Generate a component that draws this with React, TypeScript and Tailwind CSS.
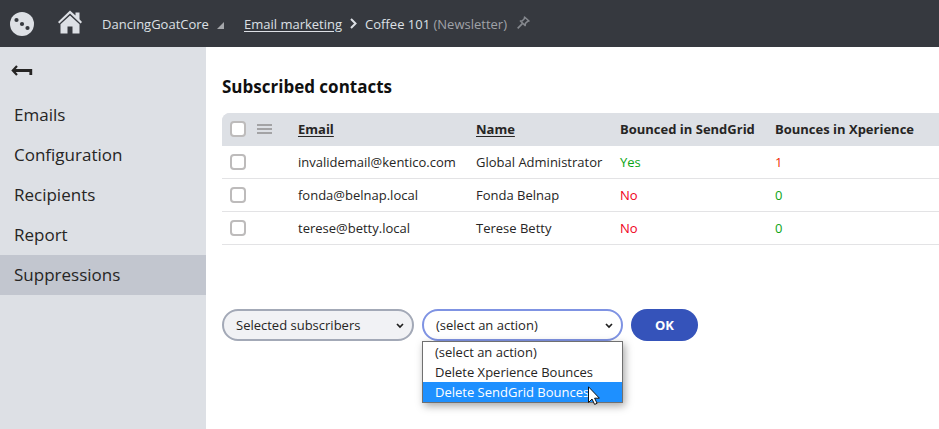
import React from "react";

const navItems = ["Emails", "Configuration", "Recipients", "Report", "Suppressions"];

const contacts = [
  { email: "invalidemail@kentico.com", name: "Global Administrator", bounced: true, bounces: 1 },
  { email: "fonda@belnap.local", name: "Fonda Belnap", bounced: false, bounces: 0 },
  { email: "terese@betty.local", name: "Terese Betty", bounced: false, bounces: 0 },
];

const actions = ["(select an action)", "Delete Xperience Bounces", "Delete SendGrid Bounces"];

function Logo() {
  return (
    <svg width="24" height="24" viewBox="0 0 24 24" aria-hidden="true">
      <circle cx="12" cy="12" r="12" fill="#dde0e5" />
      <circle cx="6.5" cy="8" r="2.1" fill="#36393f" />
      <circle cx="12" cy="12" r="2.1" fill="#36393f" />
      <circle cx="17.5" cy="16" r="2.1" fill="#36393f" />
    </svg>
  );
}

function HomeIcon() {
  return (
    <svg width="24" height="24" viewBox="0 0 24 24" fill="#dde0e5" aria-hidden="true">
      <path d="M12 0.5 L17.5 5.6 V2.5 H21.5 V9.3 L24 12 L22.6 13.4 L12 3.5 L1.4 13.4 L0 12 Z" />
      <path d="M12 5.4 L21.5 14.2 V23.5 H14.5 V16.5 H9.5 V23.5 H2.5 V14.2 Z" />
    </svg>
  );
}

function BackArrow() {
  return (
    <svg width="22" height="12" viewBox="0 0 22 12" fill="none" stroke="#262524" aria-hidden="true">
      <path d="M6 1 L1.8 5.5 L6 10" strokeWidth="2.2" />
      <path d="M2 5.5 H19.8 V10" strokeWidth="2.8" />
    </svg>
  );
}

function PinIcon() {
  return (
    <svg width="13" height="13" viewBox="0 0 13 13" fill="none" stroke="#85888e" aria-hidden="true">
      <path d="M7.5 1 L12 5 L10.6 5.4 L8.4 7.4 L8.2 9.6 L3.4 5 L5.4 4.7 L7.5 2.4 Z" strokeWidth="1.5" strokeLinejoin="round" />
      <path d="M5.6 7.4 L0.7 12.3" strokeWidth="1.7" />
    </svg>
  );
}

function Chevron() {
  return (
    <svg className="pointer-events-none absolute right-2.5 top-3.5" width="8" height="6" viewBox="0 0 8 6" fill="none" stroke="#1f1f1f" aria-hidden="true">
      <path d="M1 1 L4 4 L7 1" strokeWidth="1.7" />
    </svg>
  );
}

function Check({ label }: { label: string }) {
  return (
    <input
      type="checkbox"
      aria-label={label}
      className="block size-4 appearance-none rounded-sm border-2 border-[#bdbbbb] bg-white checked:bg-[#3553ba]"
    />
  );
}

export default function App() {
  return (
    <div className="flex min-h-screen flex-col bg-white font-['Open_Sans','Noto_Sans',sans-serif] text-[13px] leading-5 text-[#262524]">
      <header className="flex h-[47px] items-center bg-[#36393f] pl-2.5 text-[#dde0e5]">
        <a href="#dashboard" aria-label="Application list"><Logo /></a>
        <a href="#home" aria-label="Home" className="ml-6 pb-1"><HomeIcon /></a>
        <button type="button" className="ml-5 flex w-[122px] items-center gap-2 text-left">
          DancingGoatCore
          <svg className="mt-1" width="7" height="7" viewBox="0 0 7 7" fill="#a5a7ab" aria-hidden="true">
            <path d="M7 0 V7 H0 Z" />
          </svg>
        </button>
        <nav aria-label="Breadcrumb" className="ml-5 flex items-center">
          <a href="#marketing" className="underline underline-offset-2">Email marketing</a>
          <svg className="mx-2" width="7" height="11" viewBox="0 0 7 11" fill="none" stroke="#dde0e5" aria-hidden="true">
            <path d="M1 1 L5.5 5.5 L1 10" strokeWidth="2" />
          </svg>
          <span>Coffee 101 <span className="text-[#a0a2a8]">(Newsletter)</span></span>
          <button type="button" aria-label="Pin this page" className="ml-2.5 pb-0.5"><PinIcon /></button>
        </nav>
      </header>

      <div className="flex flex-1">
        <aside className="w-[206px] shrink-0 bg-[#dde0e5]">
          <div className="flex h-12 items-center pl-[11px]">
            <button type="button" aria-label="Back"><BackArrow /></button>
          </div>
          <nav aria-label="Newsletter">
            {navItems.map((item) => (
              <a
                key={item}
                href={"#" + item.toLowerCase()}
                aria-current={item === "Suppressions" ? "page" : undefined}
                className="flex h-10 items-center pl-3.5 text-[17px] aria-[current=page]:bg-[#c2c6cf]"
              >
                {item}
              </a>
            ))}
          </nav>
        </aside>

        <main className="min-w-0 flex-1 pl-4 pt-7">
          <h1 className="text-[17px] font-bold leading-6 text-[#101010]">Subscribed contacts</h1>

          <table className="mt-3.5 w-full table-fixed border-separate border-spacing-0 text-left">
            <colgroup>
              <col className="w-[35px]" />
              <col className="w-[33px]" />
              <col className="w-[178px]" />
              <col className="w-36" />
              <col className="w-[155px]" />
              <col />
            </colgroup>
            <thead>
              <tr className="h-[33px] bg-[#dde0e5] *:pb-px">
                <th className="rounded-tl-lg bg-[#dde0e5] pl-2"><Check label="Select all contacts" /></th>
                <th>
                  <button type="button" aria-label="List options" className="block">
                    <svg width="15" height="10" viewBox="0 0 15 10" fill="#a3a3a5" aria-hidden="true">
                      <path d="M0 0H15V2H0ZM0 4H15V6H0ZM0 8H15V10H0Z" />
                    </svg>
                  </button>
                </th>
                <th className="pl-2 font-bold"><a href="#sort-email" className="underline underline-offset-2">Email</a></th>
                <th className="pl-2 font-bold"><a href="#sort-name" className="underline underline-offset-2">Name</a></th>
                <th className="whitespace-nowrap pl-2 font-bold">Bounced in SendGrid</th>
                <th className="whitespace-nowrap pl-2 font-bold">Bounces in Xperience</th>
              </tr>
            </thead>
            <tbody>
              {contacts.map((c) => (
                <tr key={c.email} className="h-[33px] *:border-b *:border-[#e3e3e5]">
                  <td className="pl-2"><Check label={"Select " + c.name} /></td>
                  <td />
                  <td className="whitespace-nowrap pl-2">{c.email}</td>
                  <td className="whitespace-nowrap pl-2">{c.name}</td>
                  <td className={c.bounced ? "pl-2 text-[#0ca516]" : "pl-2 text-[#f00020]"}>{c.bounced ? "Yes" : "No"}</td>
                  <td className={c.bounces > 0 ? "pl-2 text-[#f02800]" : "pl-2 text-[#0ca516]"}>{c.bounces}</td>
                </tr>
              ))}
            </tbody>
          </table>

          <form className="mt-16 flex items-start gap-2" onSubmit={(e) => e.preventDefault()}>
            <div className="relative w-48">
              <select aria-label="Subscribers" className="block h-8 w-full appearance-none rounded-full border-2 border-[#a3a9b7] bg-[#f1f2f5] pl-3 pr-6">
                <option>Selected subscribers</option>
                <option>All subscribers</option>
              </select>
              <Chevron />
            </div>
            <div className="relative w-[201px]">
              <select aria-label="Action" className="block h-8 w-full appearance-none rounded-full border-2 border-[#7f93e3] bg-white pl-3 pr-6">
                {actions.map((a) => <option key={a}>{a}</option>)}
              </select>
              <Chevron />
              <ul role="listbox" aria-label="Actions" className="absolute left-0 top-full w-full border border-[#707070] bg-white shadow-[2px_3px_8px_rgba(0,0,0,0.35)]">
                {actions.map((a) => (
                  <li
                    key={a}
                    role="option"
                    aria-selected={a === "Delete SendGrid Bounces"}
                    className="h-5 whitespace-nowrap pl-3 aria-selected:bg-[#1e90ff] aria-selected:text-white"
                  >
                    {a}
                  </li>
                ))}
              </ul>
              <svg className="absolute left-[166px] top-[77px]" width="12" height="19" viewBox="0 0 12 19" aria-hidden="true">
                <path d="M0.5 0.8 V16.5 L4 13 L6.6 18.4 L9.1 17.3 L6.6 12.2 H11.4 Z" fill="#fff" stroke="#111" strokeWidth="1" />
              </svg>
            </div>
            <button type="submit" className="h-8 w-[67px] rounded-full bg-[#3553ba] font-bold text-white">OK</button>
          </form>
        </main>
      </div>
    </div>
  );
}
